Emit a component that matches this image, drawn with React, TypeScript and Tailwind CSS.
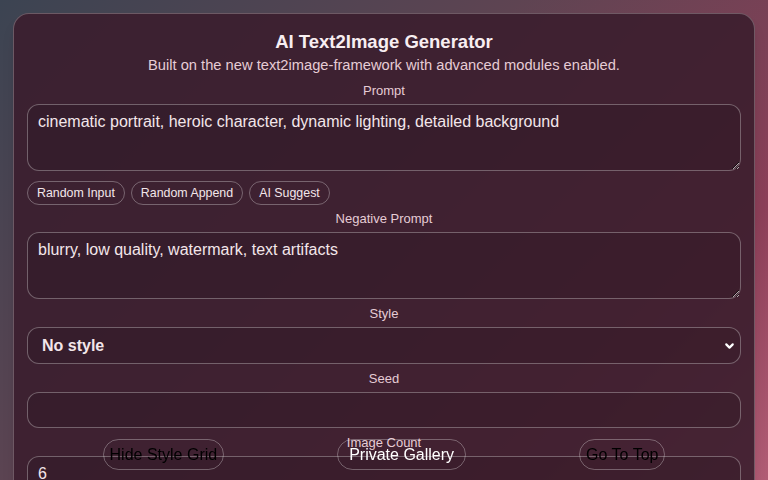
import { ChevronDown } from 'lucide-react'

const font = { fontFamily: '"Liberation Sans", Arial, sans-serif' }

function Label({ children }: { children: React.ReactNode }) {
  return <label className="block text-center text-[13px] leading-[16px] text-[#e6ccd5] mb-[5px]">{children}</label>
}

const inputCls =
  'w-full rounded-[12px] border border-white/30 bg-black/10 text-[16px] text-[#f3e6ea] outline-none'

export default function App() {
  return (
    <div
      style={font}
      className="min-h-screen w-full bg-[linear-gradient(135deg,#3c4452_0%,#5e4452_40%,#8c3f58_75%,#b8627a_100%)] p-[13px]"
    >
      <div className="rounded-[16px] border border-white/25 bg-[#3b1e2e]/90 px-[13px] pt-[16px] pb-6 shadow-lg">
        <h1 className="text-center text-[18.5px] font-bold leading-[24px] text-[#f8eef1]">AI Text2Image Generator</h1>
        <p className="mt-[1px] text-center text-[14.7px] leading-[20px] text-[#e6ccd5]">
          Built on the new text2image-framework with advanced modules enabled.
        </p>

        <div className="mt-[8px]">
          <Label>Prompt</Label>
          <textarea
            className={`${inputCls} h-[67px] px-[10px] py-[7px] leading-[20px] block`}
            defaultValue="cinematic portrait, heroic character, dynamic lighting, detailed background"
          />
        </div>

        <div className="mt-[10px] flex gap-[6px]">
          {['Random Input', 'Random Append', 'AI Suggest'].map((t) => (
            <button
              key={t}
              className="h-[24px] rounded-full border border-white/30 bg-transparent px-[9px] text-[12.4px] text-[#f3e6ea]"
            >
              {t}
            </button>
          ))}
        </div>

        <div className="mt-[6px]">
          <Label>Negative Prompt</Label>
          <textarea
            className={`${inputCls} h-[67px] px-[10px] py-[7px] leading-[20px] block`}
            defaultValue="blurry, low quality, watermark, text artifacts"
          />
        </div>

        <div className="mt-[7px]">
          <Label>Style</Label>
          <div className="relative">
            <select
              className={`${inputCls} h-[37px] appearance-none px-[14px] text-[14px] font-bold`}
              defaultValue="none"
            >
              <option value="none" className="bg-[#3a1e2d]">No style</option>
            </select>
            <ChevronDown
              className="pointer-events-none absolute right-[5px] top-1/2 -translate-y-1/2 text-white"
              size={13}
              strokeWidth={4}
            />
          </div>
        </div>

        <div className="mt-[7px]">
          <Label>Seed</Label>
          <input className={`${inputCls} h-[36px] px-[10px] block`} />
        </div>

        <div className="mt-[7px]">
          <Label>Image Count</Label>
          <input className={`${inputCls} h-[36px] px-[10px] block`} defaultValue="6" />
        </div>
      </div>

      <div className="fixed bottom-[10px] left-0 right-0 flex justify-center gap-[113px]">
        <button className="h-[31px] rounded-full border border-white/30 bg-transparent px-[6px] text-[16px] text-black">
          Hide Style Grid
        </button>
        <button className="h-[31px] rounded-full border border-white/30 bg-transparent px-[11px] text-[16px] text-white">
          Private Gallery
        </button>
        <button className="h-[31px] rounded-full border border-white/30 bg-transparent px-[6px] text-[16px] text-black">
          Go To Top
        </button>
      </div>
    </div>
  )
}
